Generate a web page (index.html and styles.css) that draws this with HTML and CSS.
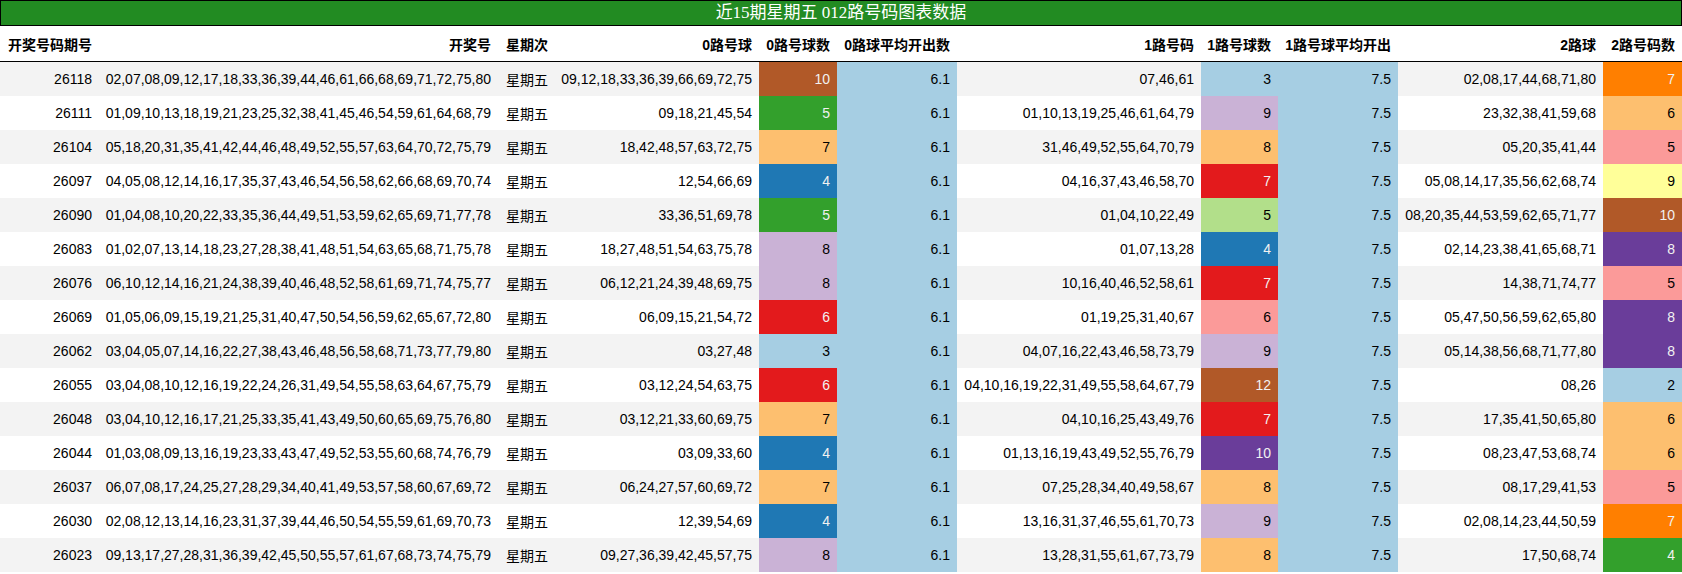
FILE: index.html
```html
<!DOCTYPE html>
<html lang="zh">
<head>
<meta charset="utf-8">
<title>近15期星期五 012路号码图表数据</title>
<link rel="stylesheet" href="styles.css">
</head>
<body>
<div class="title">近15期星期五 012路号码图表数据</div>
<table class="data">
<colgroup>
<col class="w-issue"><col class="w-draw"><col class="w-week"><col class="w-r0"><col class="w-r0n"><col class="w-r0a"><col class="w-r1"><col class="w-r1n"><col class="w-r1a"><col class="w-r2"><col class="w-r2n">
</colgroup>
<thead>
<tr><th>开奖号码期号</th><th>开奖号</th><th>星期次</th><th>0路号球</th><th>0路号球数</th><th>0路球平均开出数</th><th>1路号码</th><th>1路号球数</th><th>1路号球平均开出</th><th>2路球</th><th>2路号码数</th></tr>
</thead>
<tbody>
<tr><td>26118</td><td>02,07,08,09,12,17,18,33,36,39,44,46,61,66,68,69,71,72,75,80</td><td>星期五</td><td>09,12,18,33,36,39,66,69,72,75</td><td class="c-brown">10</td><td class="avg">6.1</td><td>07,46,61</td><td class="c-lblue">3</td><td class="avg">7.5</td><td>02,08,17,44,68,71,80</td><td class="c-orange">7</td></tr>
<tr><td>26111</td><td>01,09,10,13,18,19,21,23,25,32,38,41,45,46,54,59,61,64,68,79</td><td>星期五</td><td>09,18,21,45,54</td><td class="c-green">5</td><td class="avg">6.1</td><td>01,10,13,19,25,46,61,64,79</td><td class="c-lpurple">9</td><td class="avg">7.5</td><td>23,32,38,41,59,68</td><td class="c-lorange">6</td></tr>
<tr><td>26104</td><td>05,18,20,31,35,41,42,44,46,48,49,52,55,57,63,64,70,72,75,79</td><td>星期五</td><td>18,42,48,57,63,72,75</td><td class="c-lorange">7</td><td class="avg">6.1</td><td>31,46,49,52,55,64,70,79</td><td class="c-lorange">8</td><td class="avg">7.5</td><td>05,20,35,41,44</td><td class="c-pink">5</td></tr>
<tr><td>26097</td><td>04,05,08,12,14,16,17,35,37,43,46,54,56,58,62,66,68,69,70,74</td><td>星期五</td><td>12,54,66,69</td><td class="c-blue">4</td><td class="avg">6.1</td><td>04,16,37,43,46,58,70</td><td class="c-red">7</td><td class="avg">7.5</td><td>05,08,14,17,35,56,62,68,74</td><td class="c-yellow">9</td></tr>
<tr><td>26090</td><td>01,04,08,10,20,22,33,35,36,44,49,51,53,59,62,65,69,71,77,78</td><td>星期五</td><td>33,36,51,69,78</td><td class="c-green">5</td><td class="avg">6.1</td><td>01,04,10,22,49</td><td class="c-lgreen">5</td><td class="avg">7.5</td><td>08,20,35,44,53,59,62,65,71,77</td><td class="c-brown">10</td></tr>
<tr><td>26083</td><td>01,02,07,13,14,18,23,27,28,38,41,48,51,54,63,65,68,71,75,78</td><td>星期五</td><td>18,27,48,51,54,63,75,78</td><td class="c-lpurple">8</td><td class="avg">6.1</td><td>01,07,13,28</td><td class="c-blue">4</td><td class="avg">7.5</td><td>02,14,23,38,41,65,68,71</td><td class="c-purple">8</td></tr>
<tr><td>26076</td><td>06,10,12,14,16,21,24,38,39,40,46,48,52,58,61,69,71,74,75,77</td><td>星期五</td><td>06,12,21,24,39,48,69,75</td><td class="c-lpurple">8</td><td class="avg">6.1</td><td>10,16,40,46,52,58,61</td><td class="c-red">7</td><td class="avg">7.5</td><td>14,38,71,74,77</td><td class="c-pink">5</td></tr>
<tr><td>26069</td><td>01,05,06,09,15,19,21,25,31,40,47,50,54,56,59,62,65,67,72,80</td><td>星期五</td><td>06,09,15,21,54,72</td><td class="c-red">6</td><td class="avg">6.1</td><td>01,19,25,31,40,67</td><td class="c-pink">6</td><td class="avg">7.5</td><td>05,47,50,56,59,62,65,80</td><td class="c-purple">8</td></tr>
<tr><td>26062</td><td>03,04,05,07,14,16,22,27,38,43,46,48,56,58,68,71,73,77,79,80</td><td>星期五</td><td>03,27,48</td><td class="c-lblue">3</td><td class="avg">6.1</td><td>04,07,16,22,43,46,58,73,79</td><td class="c-lpurple">9</td><td class="avg">7.5</td><td>05,14,38,56,68,71,77,80</td><td class="c-purple">8</td></tr>
<tr><td>26055</td><td>03,04,08,10,12,16,19,22,24,26,31,49,54,55,58,63,64,67,75,79</td><td>星期五</td><td>03,12,24,54,63,75</td><td class="c-red">6</td><td class="avg">6.1</td><td>04,10,16,19,22,31,49,55,58,64,67,79</td><td class="c-brown">12</td><td class="avg">7.5</td><td>08,26</td><td class="c-lblue">2</td></tr>
<tr><td>26048</td><td>03,04,10,12,16,17,21,25,33,35,41,43,49,50,60,65,69,75,76,80</td><td>星期五</td><td>03,12,21,33,60,69,75</td><td class="c-lorange">7</td><td class="avg">6.1</td><td>04,10,16,25,43,49,76</td><td class="c-red">7</td><td class="avg">7.5</td><td>17,35,41,50,65,80</td><td class="c-lorange">6</td></tr>
<tr><td>26044</td><td>01,03,08,09,13,16,19,23,33,43,47,49,52,53,55,60,68,74,76,79</td><td>星期五</td><td>03,09,33,60</td><td class="c-blue">4</td><td class="avg">6.1</td><td>01,13,16,19,43,49,52,55,76,79</td><td class="c-purple">10</td><td class="avg">7.5</td><td>08,23,47,53,68,74</td><td class="c-lorange">6</td></tr>
<tr><td>26037</td><td>06,07,08,17,24,25,27,28,29,34,40,41,49,53,57,58,60,67,69,72</td><td>星期五</td><td>06,24,27,57,60,69,72</td><td class="c-lorange">7</td><td class="avg">6.1</td><td>07,25,28,34,40,49,58,67</td><td class="c-lorange">8</td><td class="avg">7.5</td><td>08,17,29,41,53</td><td class="c-pink">5</td></tr>
<tr><td>26030</td><td>02,08,12,13,14,16,23,31,37,39,44,46,50,54,55,59,61,69,70,73</td><td>星期五</td><td>12,39,54,69</td><td class="c-blue">4</td><td class="avg">6.1</td><td>13,16,31,37,46,55,61,70,73</td><td class="c-lpurple">9</td><td class="avg">7.5</td><td>02,08,14,23,44,50,59</td><td class="c-orange">7</td></tr>
<tr><td>26023</td><td>09,13,17,27,28,31,36,39,42,45,50,55,57,61,67,68,73,74,75,79</td><td>星期五</td><td>09,27,36,39,42,45,57,75</td><td class="c-lpurple">8</td><td class="avg">6.1</td><td>13,28,31,55,61,67,73,79</td><td class="c-lorange">8</td><td class="avg">7.5</td><td>17,50,68,74</td><td class="c-green">4</td></tr>
</tbody>
</table>
</body>
</html>
```

FILE: styles.css
```css
html, body {
  margin: 0;
  padding: 0;
  background: #ffffff;
}

.title {
  box-sizing: border-box;
  width: 1682px;
  height: 26px;
  line-height: 24px;
  border: 1px solid #000000;
  background: #228b22;
  color: #ffffff;
  text-align: center;
  font-family: "Liberation Serif", "Noto Sans CJK SC", serif;
  font-size: 17px;
}

.data {
  width: 1682px;
  table-layout: fixed;
  border-collapse: collapse;
  border-spacing: 0;
  font-family: "Liberation Sans", "Noto Sans CJK SC", sans-serif;
  font-size: 14px;
  color: #000000;
}

.w-issue { width: 99px; }
.w-draw { width: 399px; }
.w-week { width: 57px; }
.w-r0 { width: 204px; }
.w-r0n { width: 78px; }
.w-r0a { width: 120px; }
.w-r1 { width: 244px; }
.w-r1n { width: 77px; }
.w-r1a { width: 120px; }
.w-r2 { width: 205px; }
.w-r2n { width: 79px; }

.data th {
  height: 35px;
  padding: 0 7px 0 0;
  text-align: right;
  font-weight: bold;
  white-space: nowrap;
  border-bottom: 1px solid #000000;
  vertical-align: middle;
}

.data td {
  height: 34px;
  padding: 0 7px 0 0;
  text-align: right;
  white-space: nowrap;
  vertical-align: middle;
}

.data tbody tr:nth-child(odd) {
  background: #f3f3f3;
}

.data tbody tr:nth-child(even) {
  background: #ffffff;
}

.data td.avg { background: #a6cee3; color: #000000; }

.c-brown { background: #b15928; color: #f1f1f1; }
.c-green { background: #33a02c; color: #f1f1f1; }
.c-lorange { background: #fdbf6f; color: #000000; }
.c-blue { background: #1f78b4; color: #f1f1f1; }
.c-lpurple { background: #cab2d6; color: #000000; }
.c-red { background: #e31a1c; color: #f1f1f1; }
.c-lblue { background: #a6cee3; color: #000000; }
.c-lgreen { background: #b2df8a; color: #000000; }
.c-pink { background: #fb9a99; color: #000000; }
.c-purple { background: #6a3d9a; color: #f1f1f1; }
.c-orange { background: #ff7f00; color: #f1f1f1; }
.c-yellow { background: #ffff99; color: #000000; }
```
